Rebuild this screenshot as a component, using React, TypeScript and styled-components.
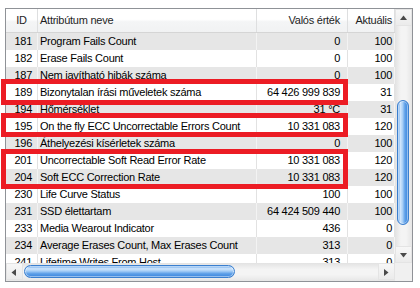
import React from "react";
import styled, { createGlobalStyle } from "styled-components";

const GlobalStyle = createGlobalStyle`
  html, body { margin: 0; padding: 0; background: #ffffff; }
  body { font-family: "Liberation Sans", Arial, sans-serif; }
`;

const Page = styled.div`
  position: relative;
  width: 420px;
  height: 288px;
  padding: 8px 0 0 5px;
  box-sizing: border-box;
`;

const Frame = styled.div`
  width: 408px;
  height: 274px;
  box-sizing: border-box;
  border: 1px solid #8f9297;
  display: grid;
  grid-template-columns: 389px 17px;
  grid-template-rows: 254px 18px;
  background: #fff;
`;

const Viewport = styled.div`
  overflow: hidden;
  display: flex;
  flex-direction: column;
`;

const cols = "32px 219px 91px 47px";

const HeaderRow = styled.div`
  display: grid;
  grid-template-columns: ${cols};
  height: 24px;
  flex: none;
  box-sizing: border-box;
  border-bottom: 1px solid #d5d5d5;
  background: linear-gradient(to bottom, #ffffff 0%, #ffffff 45%, #f4f5f6 55%, #f1f2f3 100%);
`;

const HeaderCell = styled.div<{ $align: string; $pad: number }>`
  font-size: 11px;
  letter-spacing: -0.25px;
  color: #1e1e1e;
  line-height: 23px;
  text-align: ${(p) => p.$align};
  padding: ${(p) => (p.$align === "right" ? `0 ${p.$pad}px 0 0` : `0 0 0 ${p.$pad}px`)};
  border-right: 1px solid #dedfe0;
  white-space: nowrap;
  overflow: hidden;
`;

const Row = styled.div<{ $alt: boolean }>`
  display: grid;
  grid-template-columns: ${cols};
  height: 17px;
  flex: none;
  background: ${(p) => (p.$alt ? "#e6e6e6" : "#ffffff")};
`;

const Cell = styled.div<{ $align: string; $pad: number; $alt: boolean }>`
  font-size: 11px;
  letter-spacing: -0.25px;
  color: #000;
  line-height: 17px;
  text-align: ${(p) => p.$align};
  padding: ${(p) => (p.$align === "right" ? `0 ${p.$pad}px 0 0` : `0 0 0 ${p.$pad}px`)};
  border-right: 1px solid ${(p) => (p.$alt ? "#f3f3f3" : "#e2e2e2")};
  white-space: nowrap;
  overflow: hidden;
`;

const VScroll = styled.div`
  display: flex;
  flex-direction: column;
  background: linear-gradient(to right, #e2e2e2 0%, #f4f4f4 35%, #f4f4f4 65%, #e6e6e6 100%);
`;

const HScroll = styled.div`
  display: flex;
  flex-direction: row;
  align-items: stretch;
  background: linear-gradient(to bottom, #e2e2e2 0%, #f4f4f4 35%, #f4f4f4 65%, #e6e6e6 100%);
`;

const Corner = styled.div`
  background: #f0f0f0;
`;

const ArrowBtn = styled.div`
  width: 17px;
  height: 17px;
  flex: none;
  display: flex;
  align-items: center;
  justify-content: center;
  box-sizing: border-box;
  background: linear-gradient(to bottom, #f7f7f7, #ebebeb);
  border: 1px solid #e4e4e4;
`;

const Track = styled.div`
  flex: 1;
  position: relative;
`;

const VThumb = styled.div`
  position: absolute;
  left: 2px;
  width: 12px;
  top: 74px;
  height: 125px;
  box-sizing: border-box;
  border: 1px solid #3a7fcf;
  border-radius: 7px;
  background: linear-gradient(to right, #6aa7ea 0%, #cfe5fc 25%, #a9d0f7 45%, #5d9fe8 70%, #3b86dc 100%);
  box-shadow: inset 0 0 0 1px rgba(255, 255, 255, 0.45);
`;

const HThumb = styled.div`
  position: absolute;
  top: 2px;
  height: 13px;
  left: 1px;
  width: 211px;
  box-sizing: border-box;
  border: 1px solid #3a7fcf;
  border-radius: 7px;
  background: linear-gradient(to bottom, #6aa7ea 0%, #cfe5fc 25%, #a9d0f7 45%, #5d9fe8 70%, #3b86dc 100%);
  box-shadow: inset 0 0 0 1px rgba(255, 255, 255, 0.45);
`;

const Mark = styled.div`
  position: absolute;
  box-sizing: border-box;
  border: 5px solid #ec1c24;
  pointer-events: none;
`;

type Arrow = "up" | "down" | "left" | "right";
const ArrowIcon = ({ dir }: { dir: Arrow }) => {
  const pts: Record<Arrow, string> = {
    up: "1,6 4.5,1.5 8,6",
    down: "1,2 4.5,6.5 8,2",
    left: "6,1 1.5,4.5 6,8",
    right: "2,1 6.5,4.5 2,8",
  };
  return (
    <svg width="9" height="8" viewBox="0 0 9 8">
      <polygon points={pts[dir]} fill="#4a4a4a" />
    </svg>
  );
};

const rows: [string, string, string, string][] = [
  ["181", "Program Fails Count", "0", "100"],
  ["182", "Erase Fails Count", "0", "100"],
  ["187", "Nem javítható hibák száma", "0", "100"],
  ["189", "Bizonytalan írási műveletek száma", "64 426 999 839", "31"],
  ["194", "Hőmérséklet", "31 °C", "31"],
  ["195", "On the fly ECC Uncorrectable Errors Count", "10 331 083", "120"],
  ["196", "Áthelyezési kísérletek száma", "0", "100"],
  ["201", "Uncorrectable Soft Read Error Rate", "10 331 083", "120"],
  ["204", "Soft ECC Correction Rate", "10 331 083", "120"],
  ["230", "Life Curve Status", "100", "100"],
  ["231", "SSD élettartam", "64 424 509 440", "100"],
  ["233", "Media Wearout Indicator", "436", "0"],
  ["234", "Average Erases Count, Max Erases Count", "313", "0"],
  ["241", "Lifetime Writes From Host", "313", "0"],
];

const colDefs = [
  { align: "right", pad: 5 },
  { align: "left", pad: 2 },
  { align: "right", pad: 7 },
  { align: "right", pad: 2 },
];

export default function App() {
  return (
    <>
      <GlobalStyle />
      <Page>
        <Frame>
          <Viewport>
            <HeaderRow>
              <HeaderCell $align="center" $pad={0}>ID</HeaderCell>
              <HeaderCell $align="left" $pad={2}>Attribútum neve</HeaderCell>
              <HeaderCell $align="right" $pad={7}>Valós érték</HeaderCell>
              <HeaderCell $align="right" $pad={2}>Aktuális</HeaderCell>
            </HeaderRow>
            {rows.map((r, i) => {
              const alt = i % 2 === 0;
              return (
                <Row key={r[0]} $alt={alt}>
                  {r.map((v, j) => (
                    <Cell key={j} $align={colDefs[j].align} $pad={colDefs[j].pad} $alt={alt}>
                      {v}
                    </Cell>
                  ))}
                </Row>
              );
            })}
          </Viewport>
          <VScroll>
            <ArrowBtn><ArrowIcon dir="up" /></ArrowBtn>
            <Track><VThumb /></Track>
            <ArrowBtn><ArrowIcon dir="down" /></ArrowBtn>
          </VScroll>
          <HScroll>
            <ArrowBtn><ArrowIcon dir="left" /></ArrowBtn>
            <Track><HThumb /></Track>
            <ArrowBtn><ArrowIcon dir="right" /></ArrowBtn>
          </HScroll>
          <Corner />
        </Frame>
        <Mark style={{ left: 1, top: 79, width: 347, height: 26 }} />
        <Mark style={{ left: 1, top: 113, width: 347, height: 24 }} />
        <Mark style={{ left: 1, top: 149, width: 347, height: 40 }} />
      </Page>
    </>
  );
}
